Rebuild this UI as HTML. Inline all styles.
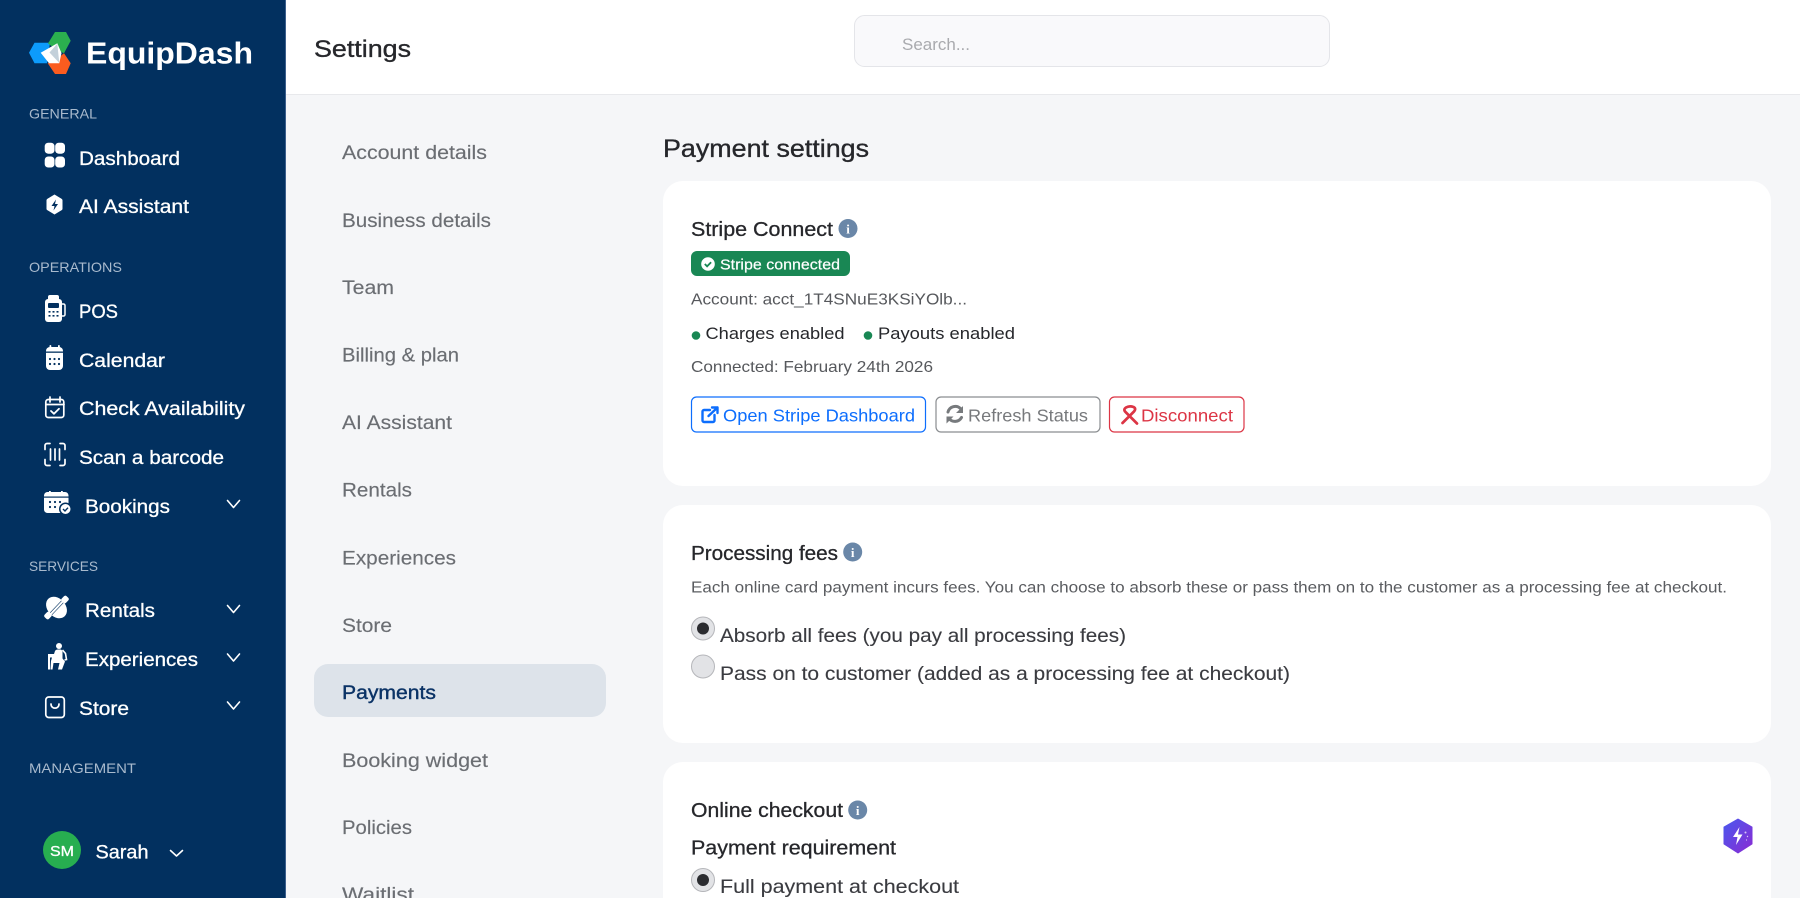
<!DOCTYPE html>
<html lang="en">
<head>
<meta charset="utf-8">
<title>Settings - EquipDash</title>
<style>
html,body{margin:0;padding:0;width:1800px;height:898px;overflow:hidden;background:#f5f6f8}
svg{display:block;position:absolute;left:0;top:0}
text{font-family:"Liberation Sans",sans-serif}
.sec{fill:#a9bacd;font-size:14px}
.side{fill:#fff;font-size:19.5px;stroke:#fff;stroke-width:.3}
.nav{fill:#6b6e73;font-size:19.5px;stroke:#6b6e73;stroke-width:.15}
.h{fill:#26272b;font-size:20px;stroke:#26272b;stroke-width:.3}
.g{fill:#56585c;font-size:16px}
.d{fill:#26272b;font-size:17px}
.opt{fill:#3a3b40;font-size:19.5px;stroke:#3a3b40;stroke-width:.12}
.chev{fill:none;stroke:#fff;stroke-width:1.6;stroke-linecap:round;stroke-linejoin:round}
</style>
</head>
<body>
<svg width="1800" height="898" viewBox="0 0 1800 898" xmlns="http://www.w3.org/2000/svg">
<defs>
<linearGradient id="fl" x1="0" y1="0" x2="1" y2="1"><stop offset="0" stop-color="#4a58ee"/><stop offset="1" stop-color="#8a2bd3"/></linearGradient>
</defs>
<rect width="1800" height="898" fill="#f5f6f8"/>

<!-- header -->
<rect x="286" y="0" width="1514" height="94" fill="#fff"/>
<rect x="286" y="94" width="1514" height="1" fill="#e8e9ec"/>
<text x="314" y="57" font-size="24" fill="#26272b" stroke="#26272b" stroke-width=".35" textLength="97" lengthAdjust="spacingAndGlyphs">Settings</text>
<rect x="854.500" y="15.500" width="475" height="51" rx="10" fill="#f9f9fb" stroke="#e4e5e9"/>
<text x="902" y="50" font-size="17" fill="#a9aaae" textLength="68" lengthAdjust="spacingAndGlyphs">Search...</text>

<!-- sidebar -->
<rect x="0" y="0" width="285" height="898" fill="#02305f"/>
<rect x="285" y="0" width="1" height="898" fill="#3c5f8c"/>
<!-- logo -->
<polygon points="29,52.700 34.500,42.700 50,42.700 47,63.300 34.500,63.300" fill="#0d9bfb"/>
<polygon points="48,43.500 55,32 66,32 70.700,40.700 64,53.300 57,50" fill="#2bb04f"/>
<polygon points="64,53.300 70.700,63.300 66,74 55,74 47.700,63.300 58,58" fill="#fb5c1f"/>
<polygon points="40.700,52.700 57.300,43.300 61.500,53 59.300,63.300 49,63.300" fill="#fff"/>
<polygon points="49.500,52.500 57.300,43.800 59.300,63" fill="#c3d0da"/>
<text x="86" y="63.500" font-size="31" font-weight="700" fill="#fff" textLength="167" lengthAdjust="spacingAndGlyphs">EquipDash</text>

<text class="sec" x="29" y="118.500" textLength="68" lengthAdjust="spacingAndGlyphs">GENERAL</text>
<text class="sec" x="29" y="272" textLength="93" lengthAdjust="spacingAndGlyphs">OPERATIONS</text>
<text class="sec" x="29" y="571" textLength="69" lengthAdjust="spacingAndGlyphs">SERVICES</text>
<text class="sec" x="29" y="773" textLength="107" lengthAdjust="spacingAndGlyphs">MANAGEMENT</text>

<text class="side" x="79" y="165" textLength="101" lengthAdjust="spacingAndGlyphs">Dashboard</text>
<text class="side" x="79" y="213" textLength="110" lengthAdjust="spacingAndGlyphs">AI Assistant</text>
<text class="side" x="79" y="318" textLength="39" lengthAdjust="spacingAndGlyphs">POS</text>
<text class="side" x="79" y="367" textLength="86" lengthAdjust="spacingAndGlyphs">Calendar</text>
<text class="side" x="79" y="415" textLength="166" lengthAdjust="spacingAndGlyphs">Check Availability</text>
<text class="side" x="79" y="464" textLength="145" lengthAdjust="spacingAndGlyphs">Scan a barcode</text>
<text class="side" x="85" y="513" textLength="85" lengthAdjust="spacingAndGlyphs">Bookings</text>
<text class="side" x="85" y="617" textLength="70" lengthAdjust="spacingAndGlyphs">Rentals</text>
<text class="side" x="85" y="666" textLength="113" lengthAdjust="spacingAndGlyphs">Experiences</text>
<text class="side" x="79" y="715" textLength="50" lengthAdjust="spacingAndGlyphs">Store</text>

<!-- dashboard icon -->
<g fill="#fff"><rect x="44.700" y="142.700" width="9.800" height="11" rx="3.500"/><rect x="55.200" y="142.700" width="9.800" height="11" rx="3.500"/><rect x="44.700" y="156.500" width="9.800" height="11" rx="3.500"/><rect x="55.200" y="156.500" width="9.800" height="11" rx="3.500"/></g>
<!-- AI icon -->
<path d="M54.500 194.500l7 4.200c.7.400 1 1 1 1.700v8.200c0 .7-.3 1.300-1 1.700l-7 4.200-7-4.200c-.7-.4-1-1-1-1.700v-8.200c0-.7.300-1.300 1-1.700z" fill="#fff"/>
<path d="M56 199.500l-4.500 6.500h3l-1 4.500 4.500-6.500h-3z" fill="#02305f"/>
<!-- POS icon -->
<rect x="48" y="295" width="11" height="6" rx="2" fill="#fff"/>
<rect x="45" y="299" width="17" height="23" rx="3" fill="#fff"/>
<path d="M62 304h1.500a1.500 1.500 0 0 1 1.500 1.500v9a1.500 1.500 0 0 1-1.500 1.500H62" fill="none" stroke="#fff" stroke-width="1.500"/>
<rect x="48" y="303" width="11" height="5" rx="1" fill="#02305f"/>
<g fill="#02305f"><rect x="48.500" y="311" width="2" height="1.600"/><rect x="52.500" y="311" width="2" height="1.600"/><rect x="56.500" y="311" width="2" height="1.600"/><rect x="48.500" y="315" width="2" height="1.600"/><rect x="52.500" y="315" width="2" height="1.600"/><rect x="56.500" y="315" width="2" height="1.600"/></g>
<!-- calendar icon -->
<rect x="46" y="347" width="17" height="23" rx="4" fill="#fff"/>
<rect x="46" y="351.500" width="17" height="1.300" fill="#02305f"/>
<rect x="49.500" y="345" width="1.800" height="5" rx=".9" fill="#fff"/><rect x="58" y="345" width="1.800" height="5" rx=".9" fill="#fff"/>
<g fill="#02305f"><circle cx="50" cy="359" r="1.100"/><circle cx="54.500" cy="359" r="1.100"/><circle cx="59" cy="359" r="1.100"/><circle cx="50" cy="364" r="1.100"/><circle cx="54.500" cy="364" r="1.100"/><circle cx="59" cy="364" r="1.100"/></g>
<!-- check availability icon -->
<rect x="45.800" y="399.500" width="18" height="18" rx="2.500" fill="none" stroke="#fff" stroke-width="1.700"/>
<path d="M46 404.500h18M50 397v5M60 397v5" fill="none" stroke="#fff" stroke-width="1.700" stroke-linecap="round"/>
<path d="M51 411l3 2.800 5-5" fill="none" stroke="#fff" stroke-width="1.800" stroke-linecap="round" stroke-linejoin="round"/>
<!-- scan icon -->
<g fill="none" stroke="#fff" stroke-width="1.700" stroke-linecap="round"><path d="M50 443.500h-3a2 2 0 0 0-2 2v4M60 443.500h3a2 2 0 0 1 2 2v4M50 465.500h-3a2 2 0 0 1-2-2v-4M60 465.500h3a2 2 0 0 0 2-2v-4M50.500 449v11M55 449v11M59.500 449v11"/></g>
<!-- bookings icon -->
<rect x="44" y="492" width="24.500" height="21" rx="3.500" fill="#fff"/>
<rect x="44" y="496.500" width="24.500" height="1.200" fill="#02305f"/>
<rect x="49" y="491" width="1.800" height="4" fill="#fff"/><rect x="61" y="491" width="1.800" height="4" fill="#fff"/>
<g fill="#02305f"><circle cx="50" cy="502" r="1.100"/><circle cx="55" cy="502" r="1.100"/><circle cx="60" cy="502" r="1.100"/><circle cx="50" cy="507" r="1.100"/><circle cx="55" cy="507" r="1.100"/></g>
<circle cx="65.500" cy="509" r="6.500" fill="#02305f"/><circle cx="65.500" cy="509" r="5" fill="#fff"/>
<path d="M63 509l2 2 3-3.300" fill="none" stroke="#02305f" stroke-width="1.400"/>
<!-- rentals icon -->
<ellipse cx="56.500" cy="607.500" rx="9" ry="12" transform="rotate(-42 56.500 607.500)" fill="#fff"/>
<path d="M47 618l19-20" stroke="#02305f" stroke-width="3.200"/>
<path d="M48 617l18-19" stroke="#fff" stroke-width="2"/>
<rect x="62" y="596" width="6" height="7" rx="2" transform="rotate(43 65 599.500)" fill="#fff"/>
<rect x="45" y="612" width="6" height="7" rx="2" transform="rotate(43 48 615.500)" fill="#fff"/>
<!-- experiences icon -->
<circle cx="59" cy="646" r="3" fill="#fff"/>
<path d="M48 654h6l1-3c.5-1 1.500-1.500 3-1.500h2c1.500 0 2.500 1 2.500 2.500v6.500l2.500 3-3 8h-4l1.500-6.500h-6l-1 6.500h-2l.5-8.500 1-3.500H50v12h-2z" fill="#fff"/>
<path d="M62.500 650l3 3.500 1 6-2 .5" fill="none" stroke="#fff" stroke-width="1.600"/>
<!-- store icon -->
<rect x="45.800" y="697" width="18.500" height="20.500" rx="3" fill="none" stroke="#fff" stroke-width="1.700"/>
<path d="M51 704c0 5.500 8 5.500 8 0" fill="none" stroke="#fff" stroke-width="1.700" stroke-linecap="round"/>
<!-- chevrons -->
<path class="chev" d="M227.500 500.500l6 7 6-7"/>
<path class="chev" d="M227.500 605.500l6 7 6-7"/>
<path class="chev" d="M227.500 654l6 7 6-7"/>
<path class="chev" d="M227.500 702l6 7 6-7"/>
<path class="chev" d="M170.500 850.500l6 5.500 6-5.500"/>
<!-- user -->
<circle cx="62" cy="850" r="19" fill="#27ae50"/>
<text x="50" y="856" font-size="15" fill="#fff" stroke="#fff" stroke-width=".3" textLength="24" lengthAdjust="spacingAndGlyphs">SM</text>
<text class="side" x="95.500" y="858.500" textLength="53" lengthAdjust="spacingAndGlyphs">Sarah</text>

<!-- settings nav -->
<rect x="314" y="664" width="292" height="53" rx="14" fill="#dde3ea"/>
<text class="nav" x="342" y="159" textLength="145" lengthAdjust="spacingAndGlyphs">Account details</text>
<text class="nav" x="342" y="227" textLength="149" lengthAdjust="spacingAndGlyphs">Business details</text>
<text class="nav" x="342" y="294" textLength="52" lengthAdjust="spacingAndGlyphs">Team</text>
<text class="nav" x="342" y="361.500" textLength="117" lengthAdjust="spacingAndGlyphs">Billing &amp; plan</text>
<text class="nav" x="342" y="429" textLength="110" lengthAdjust="spacingAndGlyphs">AI Assistant</text>
<text class="nav" x="342" y="496.500" textLength="70" lengthAdjust="spacingAndGlyphs">Rentals</text>
<text class="nav" x="342" y="564.500" textLength="114" lengthAdjust="spacingAndGlyphs">Experiences</text>
<text class="nav" x="342" y="632" textLength="50" lengthAdjust="spacingAndGlyphs">Store</text>
<text x="342" y="699" font-size="19.500" fill="#0b3366" stroke="#0b3366" stroke-width=".4" textLength="94" lengthAdjust="spacingAndGlyphs">Payments</text>
<text class="nav" x="342" y="767" textLength="146" lengthAdjust="spacingAndGlyphs">Booking widget</text>
<text class="nav" x="342" y="834" textLength="70" lengthAdjust="spacingAndGlyphs">Policies</text>
<text class="nav" x="342" y="901" textLength="72" lengthAdjust="spacingAndGlyphs">Waitlist</text>

<!-- main -->
<text x="663" y="157" font-size="25" fill="#26272b" stroke="#26272b" stroke-width=".35" textLength="206" lengthAdjust="spacingAndGlyphs">Payment settings</text>

<!-- card 1 -->
<rect x="663" y="181" width="1108" height="305" rx="20" fill="#fff"/>
<text class="h" x="691" y="236" textLength="142" lengthAdjust="spacingAndGlyphs">Stripe Connect</text>
<circle cx="848" cy="228.500" r="9.500" fill="#6a87a8"/>
<text x="848" y="233.500" font-size="13" font-weight="700" fill="#fff" text-anchor="middle" style="font-family:'Liberation Serif',serif">i</text>
<rect x="691" y="251" width="159" height="25" rx="6" fill="#198754"/>
<circle cx="708" cy="264" r="6.800" fill="#fff"/>
<path d="M704.800 264l2.300 2.300 4-4" fill="none" stroke="#198754" stroke-width="1.800"/>
<text x="720" y="269.500" font-size="15" fill="#fff" stroke="#fff" stroke-width=".2" textLength="120" lengthAdjust="spacingAndGlyphs">Stripe connected</text>
<text x="691" y="304.500" font-size="16" fill="#56585c" textLength="276" lengthAdjust="spacingAndGlyphs">Account: acct_1T4SNuE3KSiYOlb...</text>
<circle cx="696" cy="335.500" r="4.300" fill="#198754"/>
<text class="d" x="705.500" y="339" textLength="139" lengthAdjust="spacingAndGlyphs">Charges enabled</text>
<circle cx="868" cy="335.500" r="4.300" fill="#198754"/>
<text class="d" x="878" y="339" textLength="137" lengthAdjust="spacingAndGlyphs">Payouts enabled</text>
<text class="g" x="691" y="372" textLength="242" lengthAdjust="spacingAndGlyphs">Connected: February 24th 2026</text>

<rect x="691.500" y="397" width="234" height="35" rx="5" fill="#fff" stroke="#0d6efd" stroke-width="1.200"/>
<g fill="none" stroke="#0d6efd" stroke-width="2.400" stroke-linecap="round" stroke-linejoin="round"><path d="M710 410h-6a1.500 1.500 0 0 0-1.500 1.500v9a1.500 1.500 0 0 0 1.500 1.500h9a1.500 1.500 0 0 0 1.500-1.500V415"/><path d="M708.500 416l9-8.500M712 407.500h5.500v5.500"/></g>
<text x="723" y="421.500" font-size="17.500" fill="#0d6efd" textLength="192" lengthAdjust="spacingAndGlyphs">Open Stripe Dashboard</text>

<rect x="936" y="397" width="164" height="35" rx="5" fill="#fff" stroke="#8a8d90" stroke-width="1.200"/>
<g fill="none" stroke="#777a7d" stroke-width="3" stroke-linecap="round"><path d="M948 412a7.500 7.500 0 0 1 12.500-3.500"/><path d="M961.500 417.500a7.500 7.500 0 0 1-12.500 1"/></g>
<path d="M963 406v7h-7zM946.500 423.500v-7h7z" fill="#777a7d"/>
<text x="968" y="421.500" font-size="17.500" fill="#77797c" textLength="120" lengthAdjust="spacingAndGlyphs">Refresh Status</text>

<rect x="1109.500" y="397" width="134.500" height="35" rx="5" fill="#fff" stroke="#dc3545" stroke-width="1.200"/>
<path d="M1122.500 423L1134 411.500Q1136.500 408.500 1133.500 407Q1129.500 405.500 1126 407.500Q1123 409.500 1125.500 412L1137 423.500" fill="none" stroke="#dc3545" stroke-width="2.700" stroke-linecap="round" stroke-linejoin="round"/>
<text x="1141" y="421.500" font-size="17.500" fill="#dc3545" textLength="92" lengthAdjust="spacingAndGlyphs">Disconnect</text>

<!-- card 2 -->
<rect x="663" y="505" width="1108" height="238" rx="20" fill="#fff"/>
<text class="h" x="691" y="560" textLength="147" lengthAdjust="spacingAndGlyphs">Processing fees</text>
<circle cx="852.700" cy="552" r="9.500" fill="#6a87a8"/>
<text x="852.700" y="557" font-size="13" font-weight="700" fill="#fff" text-anchor="middle" style="font-family:'Liberation Serif',serif">i</text>
<text x="691" y="592.500" font-size="15.500" fill="#5a5c60" textLength="1036" lengthAdjust="spacingAndGlyphs">Each online card payment incurs fees. You can choose to absorb these or pass them on to the customer as a processing fee at checkout.</text>
<circle cx="703" cy="628.500" r="11.500" fill="#e2e3e6" stroke="#b5b6ba"/>
<circle cx="703" cy="628.500" r="6" fill="#2b2c30"/>
<text class="opt" x="720" y="642" textLength="406" lengthAdjust="spacingAndGlyphs">Absorb all fees (you pay all processing fees)</text>
<circle cx="703" cy="666.500" r="11.500" fill="#e2e3e6" stroke="#b5b6ba"/>
<text class="opt" x="720" y="680" textLength="570" lengthAdjust="spacingAndGlyphs">Pass on to customer (added as a processing fee at checkout)</text>

<!-- card 3 -->
<rect x="663" y="762" width="1108" height="160" rx="20" fill="#fff"/>
<text class="h" x="691" y="817" textLength="152" lengthAdjust="spacingAndGlyphs">Online checkout</text>
<circle cx="857.700" cy="810" r="9.500" fill="#6a87a8"/>
<text x="857.700" y="815" font-size="13" font-weight="700" fill="#fff" text-anchor="middle" style="font-family:'Liberation Serif',serif">i</text>
<text class="h" x="691" y="854.500" textLength="205" lengthAdjust="spacingAndGlyphs">Payment requirement</text>
<circle cx="703" cy="880" r="11.500" fill="#e2e3e6" stroke="#b5b6ba"/>
<circle cx="703" cy="880" r="6" fill="#2b2c30"/>
<text class="opt" x="720" y="893" textLength="239" lengthAdjust="spacingAndGlyphs">Full payment at checkout</text>

<!-- floating assistant -->
<path d="M1738 819l14 8v17l-14 9-14-9v-17z" fill="url(#fl)" stroke="url(#fl)" stroke-linejoin="round"/>
<path d="M1739.500 827l-6.500 10h4.500l-1.500 8 6.500-10.500h-4.500z" fill="#fff"/>
<g fill="#fff" opacity=".7"><circle cx="1745.500" cy="832.500" r="1"/><circle cx="1747.500" cy="836.500" r=".7"/><circle cx="1746.500" cy="840" r=".6"/></g>
</svg>
</body>
</html>
